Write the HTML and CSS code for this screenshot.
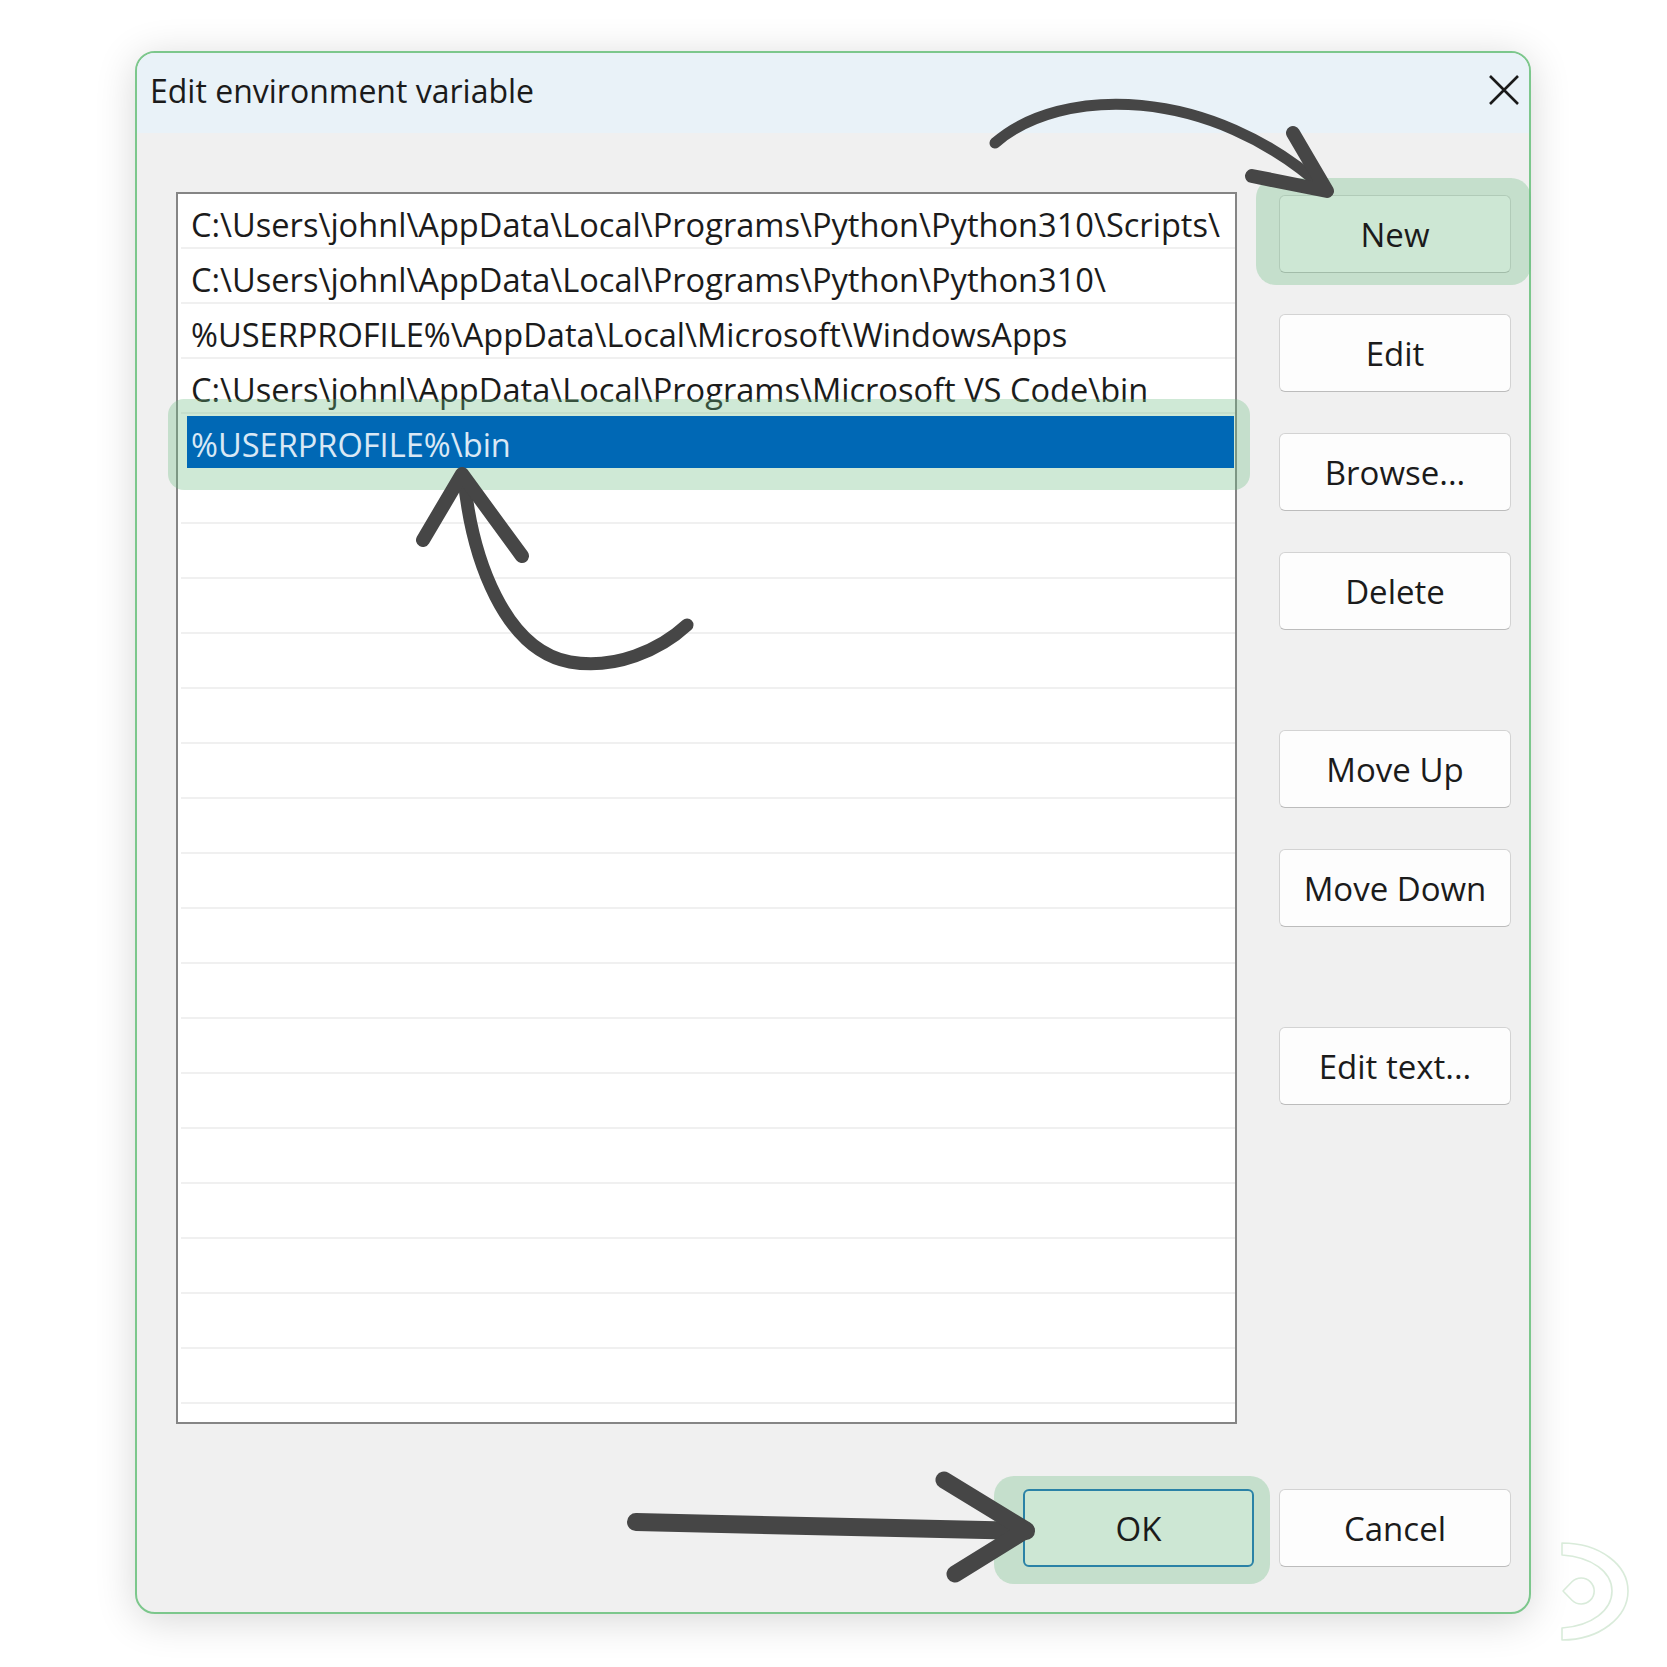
FILE: index.html
```html
<!DOCTYPE html>
<html lang="en">
<head>
<meta charset="utf-8">
<title>Edit environment variable</title>
<link rel="stylesheet" href="styles.css">
</head>
<body>
<div class="stage">
  <div class="dialog">
    <div class="titlebar">
      <span class="title">Edit environment variable</span>
      <svg class="close" width="32" height="32" viewBox="0 0 32 32"><path d="M2 2 L30 30 M30 2 L2 30" stroke="#1a1a1a" stroke-width="2.6" fill="none"/></svg>
    </div>
    <div class="main">
      <div class="list">
        <div class="row">C:\Users\johnl\AppData\Local\Programs\Python\Python310\Scripts\</div>
        <div class="row">C:\Users\johnl\AppData\Local\Programs\Python\Python310\</div>
        <div class="row">%USERPROFILE%\AppData\Local\Microsoft\WindowsApps</div>
        <div class="row">C:\Users\johnl\AppData\Local\Programs\Microsoft VS Code\bin</div>
        <div class="row selected"><span class="sel">%USERPROFILE%\bin</span></div>
        <div class="row"></div><div class="row"></div><div class="row"></div><div class="row"></div>
        <div class="row"></div><div class="row"></div><div class="row"></div><div class="row"></div>
        <div class="row"></div><div class="row"></div><div class="row"></div><div class="row"></div>
        <div class="row"></div><div class="row"></div><div class="row"></div><div class="row"></div>
        <div class="row"></div>
        <div class="hl hl-row"></div>
      </div>
      <div class="buttons">
        <div class="btn btn-new"><span class="lbl">New</span><span class="hl hl-new"></span></div>
        <div class="btn">Edit</div>
        <div class="btn">Browse...</div>
        <div class="btn">Delete</div>
        <div class="btn spaced">Move Up</div>
        <div class="btn">Move Down</div>
        <div class="btn spaced">Edit text...</div>
      </div>
    </div>
    <div class="footer">
      <div class="btn btn-ok"><span class="lbl">OK</span><span class="hl hl-ok"></span></div>
      <div class="btn">Cancel</div>
    </div>
  </div>
  <svg class="annot" width="1667" height="1667" viewBox="0 0 1667 1667">
    <g fill="none" stroke="#464646" stroke-linecap="round" stroke-linejoin="round">
      <path d="M995 143 C1060 86 1210 84 1326 190" stroke-width="11"/>
      <path d="M1293 133 L1327 191 L1252 176" stroke-width="14"/>
      <path d="M687 625 C660 650 615 670 570 662 C505 650 472 560 464 478" stroke-width="13"/>
      <path d="M423 540 L462 474 L522 556" stroke-width="14"/>
      <path d="M636 1522 L1026 1531" stroke-width="18"/>
      <path d="M944 1480 L1026 1530 L955 1574" stroke-width="17"/>
    </g>
    <g fill="none" stroke="#d9ebda" stroke-width="1.6" stroke-linejoin="round">
      <path d="M1562 1543 C1600 1543 1628 1565 1628 1591 C1628 1617 1600 1640 1562 1640 L1562 1628 C1592 1626 1612 1610 1612 1591 C1612 1572 1592 1557 1562 1555 Z"/>
      <path d="M1563 1591 L1572 1581.8 A13 13 0 1 1 1572 1600.2 Z"/>
    </g>
  </svg>
</div>
</body>
</html>
```

FILE: styles.css
```css
* { box-sizing: border-box; }
html, body { margin: 0; padding: 0; background: #ffffff; }
.stage {
  position: relative;
  width: 1667px;
  height: 1667px;
  padding: 51px 0 0 135px;
  font-family: "Open Sans", "Noto Sans", sans-serif;
  color: #1b1b1b;
}
.dialog {
  width: 1396px;
  height: 1563px;
  border: 2px solid #7cc78c;
  border-radius: 20px;
  background: #f0f0f0;
  box-shadow: 0 6px 40px rgba(0, 0, 0, 0.16);
  display: flex;
  flex-direction: column;
}
.titlebar {
  height: 80px;
  flex: none;
  background: #e9f2f8;
  border-radius: 18px 18px 0 0;
  display: flex;
  align-items: center;
  justify-content: space-between;
  padding: 0 9px 6px 13px;
}
.title {
  font-size: 32px;
}
.close { display: block; }
.main {
  display: flex;
  padding: 59px 18px 0 39px;
  gap: 42px;
}
.list {
  position: relative;
  width: 1061px;
  height: 1232px;
  border: 2px solid #858585;
  background: #ffffff;
  flex: none;
}
.row {
  height: 55px;
  margin-left: 3px;
  border-bottom: 2px solid #f0f0f0;
  padding: 8px 0 0 10px;
  font-size: 32.6px;
  line-height: 45px;
  white-space: nowrap;
}
.row.selected {
  border-bottom-color: transparent;
  padding: 2px 1px 0 6px;
}
.sel {
  position: relative;
  z-index: 3;
  display: block;
  height: 52px;
  background: #0068b5;
  color: #d9e8f5;
  padding: 8px 0 0 4px;
  line-height: 42px;
}
.hl {
  position: absolute;
  z-index: 2;
  background: rgba(109, 188, 130, 0.33);
  pointer-events: none;
}
.hl-row {
  left: -10px;
  top: 205px;
  width: 1082px;
  height: 91px;
  border-radius: 16px;
}
.buttons {
  width: 232px;
  flex: none;
  display: flex;
  flex-direction: column;
  gap: 41px;
  padding-top: 3px;
}
.btn {
  position: relative;
  height: 78px;
  width: 232px;
  flex: none;
  background: #fdfdfd;
  border: 1px solid #d3d3d3;
  border-bottom-color: #bcbcbc;
  border-radius: 6px;
  display: flex;
  align-items: center;
  justify-content: center;
  font-size: 33px;
}
.lbl {
  position: relative;
  z-index: 3;
}
.btn.spaced { margin-top: 59px; }
.hl-new {
  left: -24px;
  right: -21px;
  top: -18px;
  bottom: -13px;
  border-radius: 20px;
}
.footer {
  display: flex;
  justify-content: flex-end;
  gap: 25px;
  padding: 65px 18px 0 0;
}
.btn-ok {
  width: 231px;
  border: 2px solid #0a66b8;
}
.hl-ok {
  left: -31px;
  right: -18px;
  top: -15px;
  bottom: -19px;
  border-radius: 20px;
}
.annot {
  position: absolute;
  left: 0;
  top: 0;
  z-index: 5;
  pointer-events: none;
}
```
